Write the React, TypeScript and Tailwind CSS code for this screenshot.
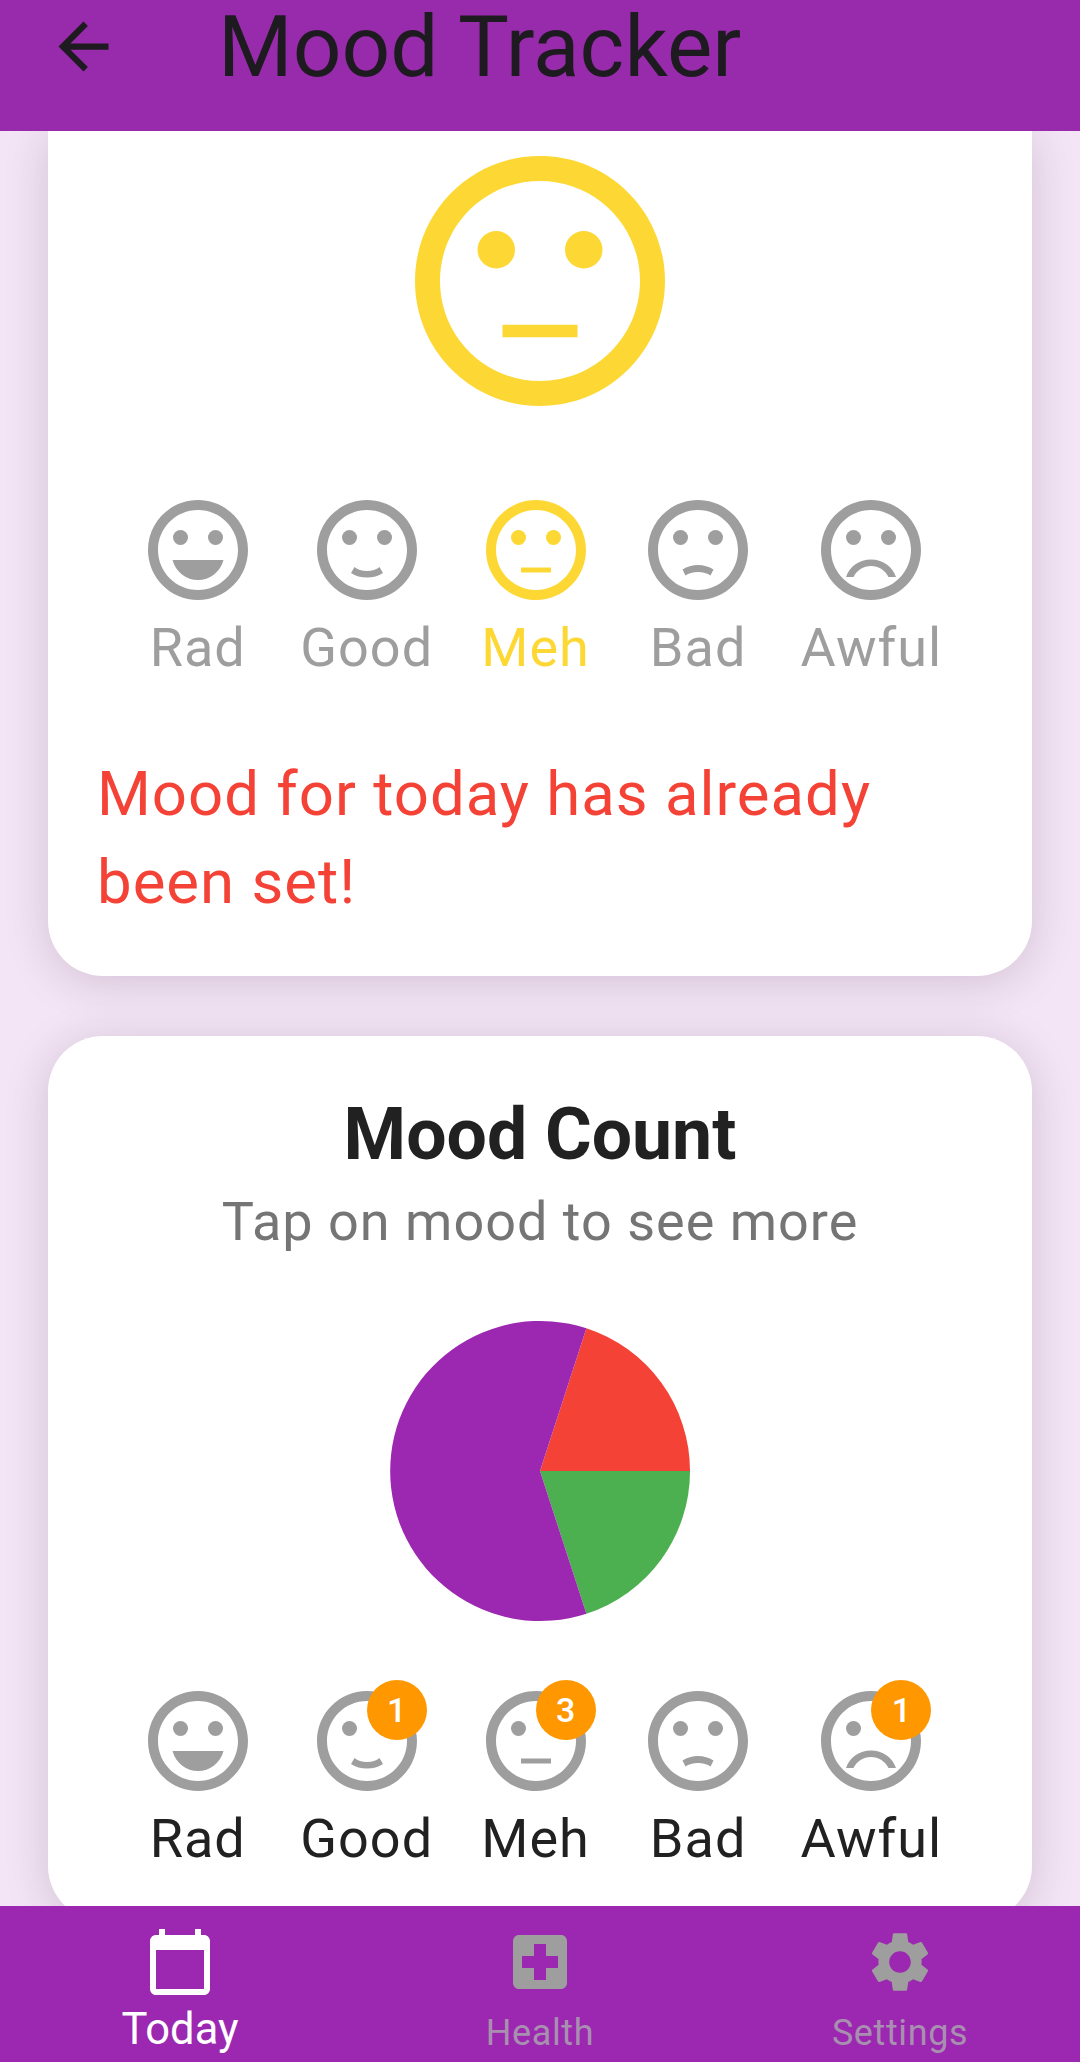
import type { ReactNode } from 'react';

const RING =
  'M11.99 2C6.47 2 2 6.48 2 12s4.47 10 9.99 10C17.52 22 22 17.52 22 12S17.52 2 11.99 2zM12 20c-4.42 0-8-3.58-8-8s3.58-8 8-8 8 3.58 8 8-3.58 8-8 8z';

type MoodName = 'Rad' | 'Good' | 'Meh' | 'Bad' | 'Awful';

const MOUTHS: Record<MoodName, string> = {
  Rad: 'M6.9 14h10.2c-.7 2.5-2.8 4-5.1 4s-4.4-1.5-5.1-4z',
  Good: 'M9.5 15.4c.6.5 1.5.8 2.5.8s1.9-.3 2.5-.8l.7 1.2c-.9.6-2 .9-3.2.9s-2.3-.3-3.2-.9z',
  Meh: 'M9 15.5h6v1H9z',
  Bad: 'M8.9 15.9c.9-.6 2-.9 3.1-.9s2.2.3 3.1.9l-.6 1.2c-.6-.4-1.5-.7-2.5-.7s-1.9.3-2.5.7z',
  Awful: 'M7 17.4c.7-2.1 2.7-3.5 5-3.5s4.3 1.4 5 3.5h-1.5c-.6-1.3-2-2.2-3.5-2.2s-2.9.9-3.5 2.2z',
};

const MOODS: MoodName[] = ['Rad', 'Good', 'Meh', 'Bad', 'Awful'];
const COUNTS: Partial<Record<MoodName, number>> = { Good: 1, Meh: 3, Awful: 1 };

function Face({ mood, className }: { mood: MoodName; className: string }) {
  return (
    <svg viewBox="0 0 24 24" className={className} fill="currentColor" aria-hidden>
      <path d={RING} />
      <circle cx="8.5" cy="9.5" r="1.5" />
      <circle cx="15.5" cy="9.5" r="1.5" />
      <path d={MOUTHS[mood]} />
    </svg>
  );
}

function MoodRow({ selected, counts, labelClass }: { selected?: MoodName; counts?: typeof COUNTS; labelClass: string }) {
  return (
    <div className="flex justify-center gap-[42.5px]">
      {MOODS.map((mood) => {
        const active = mood === selected;
        const count = counts?.[mood];
        return (
          <div key={mood} className="flex min-w-[120px] flex-col items-center">
            <div className="relative h-[120px] w-[120px]">
              <Face mood={mood} className={`h-[120px] w-[120px] ${active ? 'text-[#FDD835]' : 'text-[#9E9E9E]'}`} />
              {count != null && (
                <span className="absolute left-[60px] top-[-1px] flex h-[60px] w-[60px] items-center justify-center rounded-full bg-[#FF9800] text-[34px] font-medium text-white">
                  {count}
                </span>
              )}
            </div>
            <span className={`mt-[6px] text-[54px] leading-[64px] tracking-[1px] ${active ? 'text-[#FDD835]' : labelClass}`}>
              {mood}
            </span>
          </div>
        );
      })}
    </div>
  );
}

function NavItem({ icon, label, active }: { icon: ReactNode; label: string; active?: boolean }) {
  return (
    <div className={`flex flex-1 flex-col items-center ${active ? 'text-white' : 'text-[#9E9E9E]'}`}>
      <svg viewBox="0 0 24 24" className="mt-[20px] h-[72px] w-[72px]" fill="currentColor" aria-hidden>
        {icon}
      </svg>
      <span
        className={
          active
            ? 'mt-[7px] text-[43.5px] leading-[50px]'
            : 'mt-[10px] text-[36px] leading-[50px] tracking-[0.6px] text-[#A88FB0]'
        }
      >
        {label}
      </span>
    </div>
  );
}

export default function App() {
  return (
    <div className="flex h-[2062px] w-[1080px] flex-col overflow-hidden bg-[#F3E5F5] font-['Roboto',sans-serif]">
      <header className="z-10 flex h-[131px] shrink-0 bg-[#982BAB] text-[#1D1B20]">
        <svg viewBox="0 0 24 24" className="ml-[46px] mt-[9px] h-[75px] w-[75px]" fill="currentColor" aria-hidden>
          <path d="M20 11H7.83l5.59-5.59L12 4l-8 8 8 8 1.41-1.41L7.83 13H20v-2z" />
        </svg>
        <h1 className="ml-[97px] text-[85.5px] font-normal leading-[94px]">Mood Tracker</h1>
      </header>

      <main className="flex min-h-0 flex-1 flex-col gap-[60px] overflow-hidden px-[48px]">
        <section className="shrink-0 rounded-b-[55px] bg-white pb-[50px] shadow-[0_6px_44px_rgba(60,30,70,0.18)]">
          <div className="flex justify-center">
            <Face mood="Meh" className="h-[300px] w-[300px] text-[#FDD835]" />
          </div>
          <div className="mt-[59px]">
            <MoodRow selected="Meh" labelClass="text-[#9E9E9E]" />
          </div>
          <p className="mt-[70px] px-[49px] text-[61.7px] leading-[88px] tracking-[1px] text-[#F44336]">
            Mood for today has already been set!
          </p>
        </section>

        <section className="h-[885px] shrink-0 rounded-[55px] bg-white pt-[59px] shadow-[0_6px_44px_rgba(60,30,70,0.18)]">
          <h2 className="text-center text-[71.5px] font-bold leading-[80px] text-[#212121]">Mood Count</h2>
          <p className="mt-[17px] text-center text-[54px] leading-[60px] tracking-[1px] text-[#757575]">
            Tap on mood to see more
          </p>
          <div className="mt-[69px] flex justify-center">
            <svg viewBox="-150 -150 300 300" className="h-[300px] w-[300px]" aria-label="Mood pie chart">
              <path d="M0 0L46.4-142.7A150 150 0 0 1 150 0z" fill="#F44336" />
              <path d="M0 0L150 0A150 150 0 0 1 46.4 142.7z" fill="#4CAF50" />
              <path d="M0 0L46.4 142.7A150 150 0 1 1 46.4-142.7z" fill="#9C27B0" />
            </svg>
          </div>
          <div className="mt-[60px]">
            <MoodRow counts={COUNTS} labelClass="text-[#212121]" />
          </div>
        </section>
      </main>

      <nav className="z-10 flex h-[156px] shrink-0 bg-[#9C27B0]">
        <NavItem
          active
          label="Today"
          icon={<path d="M20 3h-1V1h-2v2H7V1H5v2H4c-1.1 0-2 .9-2 2v16c0 1.1.9 2 2 2h16c1.1 0 2-.9 2-2V5c0-1.1-.9-2-2-2zm0 18H4V8h16v13z" />}
        />
        <NavItem
          label="Health"
          icon={<path d="M19 3H5c-1.1 0-1.99.9-1.99 2L3 19c0 1.1.9 2 2 2h14c1.1 0 2-.9 2-2V5c0-1.1-.9-2-2-2zm-1 11h-4v4h-4v-4H6v-4h4V6h4v4h4v4z" />}
        />
        <NavItem
          label="Settings"
          icon={<path d="M19.14 12.94c.04-.3.06-.61.06-.94 0-.32-.02-.64-.07-.94l2.03-1.58c.18-.14.23-.41.12-.61l-1.92-3.32c-.12-.22-.37-.29-.59-.22l-2.39.96c-.5-.38-1.03-.7-1.62-.94L14.4 2.81c-.04-.24-.24-.41-.48-.41h-3.84c-.24 0-.43.17-.47.41L9.25 5.35C8.66 5.59 8.12 5.92 7.63 6.29L5.24 5.33c-.22-.08-.47 0-.59.22L2.74 8.87c-.12.21-.08.47.12.61l2.03 1.58c-.05.3-.09.63-.09.94s.02.64.07.94l-2.03 1.58c-.18.14-.23.41-.12.61l1.92 3.32c.12.22.37.29.59.22l2.39-.96c.5.38 1.03.7 1.62.94l.36 2.54c.05.24.24.41.48.41h3.84c.24 0 .44-.17.47-.41l.36-2.54c.59-.24 1.13-.56 1.62-.94l2.39.96c.22.08.47 0 .59-.22l1.92-3.32c.12-.22.07-.47-.12-.61l-2.01-1.58zM12 15.6c-1.98 0-3.6-1.62-3.6-3.6s1.62-3.6 3.6-3.6 3.6 1.62 3.6 3.6-1.62 3.6-3.6 3.6z" />}
        />
      </nav>
    </div>
  );
}
